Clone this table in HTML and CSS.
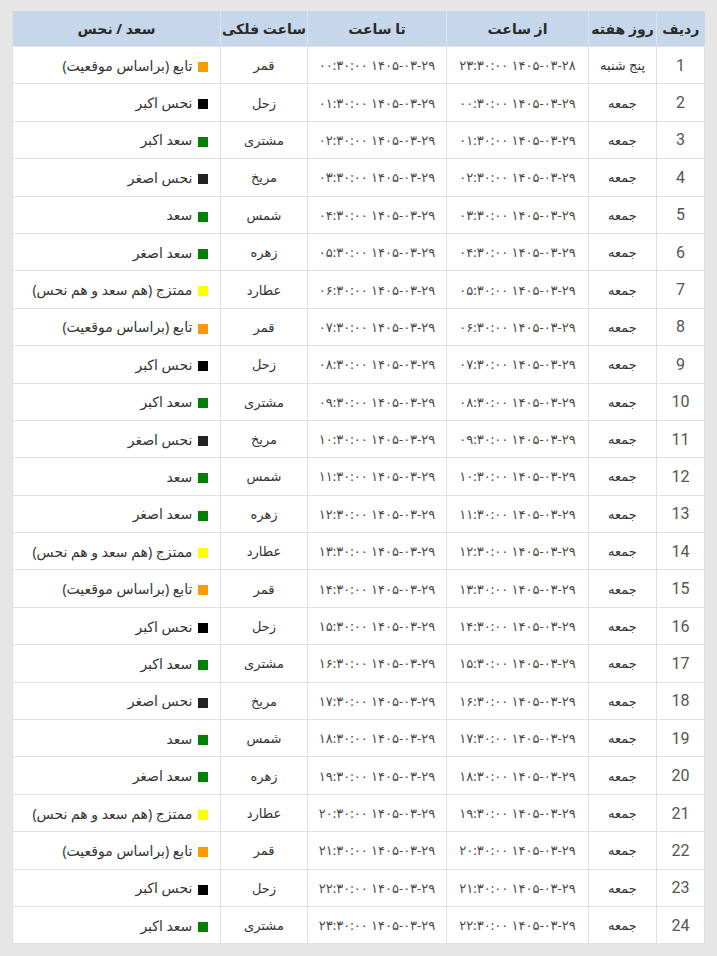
FILE: index.html
```html
<!DOCTYPE html>
<html lang="fa" dir="rtl">
<head>
<meta charset="utf-8">
<title>ساعات فلکی</title>
<link rel="stylesheet" href="styles.css">
</head>
<body>
<div class="wrap">
<table class="hours">
<colgroup>
<col class="c-num"><col class="c-day"><col class="c-from"><col class="c-to"><col class="c-planet"><col class="c-type">
</colgroup>
<thead>
<tr><th>ردیف</th><th>روز هفته</th><th>از ساعت</th><th>تا ساعت</th><th>ساعت فلکی</th><th>سعد / نحس</th></tr>
</thead>
<tbody>
<tr><td class="num">1</td><td>پنج شنبه</td><td class="time">۱۴۰۵-۰۳-۲۸ ۲۳:۳۰:۰۰</td><td class="time">۱۴۰۵-۰۳-۲۹ ۰۰:۳۰:۰۰</td><td>قمر</td><td class="type"><span class="sq orange"></span> تابع (براساس موقعیت)</td></tr>
<tr><td class="num">2</td><td>جمعه</td><td class="time">۱۴۰۵-۰۳-۲۹ ۰۰:۳۰:۰۰</td><td class="time">۱۴۰۵-۰۳-۲۹ ۰۱:۳۰:۰۰</td><td>زحل</td><td class="type"><span class="sq black"></span> نحس اکبر</td></tr>
<tr><td class="num">3</td><td>جمعه</td><td class="time">۱۴۰۵-۰۳-۲۹ ۰۱:۳۰:۰۰</td><td class="time">۱۴۰۵-۰۳-۲۹ ۰۲:۳۰:۰۰</td><td>مشتری</td><td class="type"><span class="sq green"></span> سعد اکبر</td></tr>
<tr><td class="num">4</td><td>جمعه</td><td class="time">۱۴۰۵-۰۳-۲۹ ۰۲:۳۰:۰۰</td><td class="time">۱۴۰۵-۰۳-۲۹ ۰۳:۳۰:۰۰</td><td>مریخ</td><td class="type"><span class="sq dark"></span> نحس اصغر</td></tr>
<tr><td class="num">5</td><td>جمعه</td><td class="time">۱۴۰۵-۰۳-۲۹ ۰۳:۳۰:۰۰</td><td class="time">۱۴۰۵-۰۳-۲۹ ۰۴:۳۰:۰۰</td><td>شمس</td><td class="type"><span class="sq green"></span> سعد</td></tr>
<tr><td class="num">6</td><td>جمعه</td><td class="time">۱۴۰۵-۰۳-۲۹ ۰۴:۳۰:۰۰</td><td class="time">۱۴۰۵-۰۳-۲۹ ۰۵:۳۰:۰۰</td><td>زهره</td><td class="type"><span class="sq green"></span> سعد اصغر</td></tr>
<tr><td class="num">7</td><td>جمعه</td><td class="time">۱۴۰۵-۰۳-۲۹ ۰۵:۳۰:۰۰</td><td class="time">۱۴۰۵-۰۳-۲۹ ۰۶:۳۰:۰۰</td><td>عطارد</td><td class="type"><span class="sq yellow"></span> ممتزج (هم سعد و هم نحس)</td></tr>
<tr><td class="num">8</td><td>جمعه</td><td class="time">۱۴۰۵-۰۳-۲۹ ۰۶:۳۰:۰۰</td><td class="time">۱۴۰۵-۰۳-۲۹ ۰۷:۳۰:۰۰</td><td>قمر</td><td class="type"><span class="sq orange"></span> تابع (براساس موقعیت)</td></tr>
<tr><td class="num">9</td><td>جمعه</td><td class="time">۱۴۰۵-۰۳-۲۹ ۰۷:۳۰:۰۰</td><td class="time">۱۴۰۵-۰۳-۲۹ ۰۸:۳۰:۰۰</td><td>زحل</td><td class="type"><span class="sq black"></span> نحس اکبر</td></tr>
<tr><td class="num">10</td><td>جمعه</td><td class="time">۱۴۰۵-۰۳-۲۹ ۰۸:۳۰:۰۰</td><td class="time">۱۴۰۵-۰۳-۲۹ ۰۹:۳۰:۰۰</td><td>مشتری</td><td class="type"><span class="sq green"></span> سعد اکبر</td></tr>
<tr><td class="num">11</td><td>جمعه</td><td class="time">۱۴۰۵-۰۳-۲۹ ۰۹:۳۰:۰۰</td><td class="time">۱۴۰۵-۰۳-۲۹ ۱۰:۳۰:۰۰</td><td>مریخ</td><td class="type"><span class="sq dark"></span> نحس اصغر</td></tr>
<tr><td class="num">12</td><td>جمعه</td><td class="time">۱۴۰۵-۰۳-۲۹ ۱۰:۳۰:۰۰</td><td class="time">۱۴۰۵-۰۳-۲۹ ۱۱:۳۰:۰۰</td><td>شمس</td><td class="type"><span class="sq green"></span> سعد</td></tr>
<tr><td class="num">13</td><td>جمعه</td><td class="time">۱۴۰۵-۰۳-۲۹ ۱۱:۳۰:۰۰</td><td class="time">۱۴۰۵-۰۳-۲۹ ۱۲:۳۰:۰۰</td><td>زهره</td><td class="type"><span class="sq green"></span> سعد اصغر</td></tr>
<tr><td class="num">14</td><td>جمعه</td><td class="time">۱۴۰۵-۰۳-۲۹ ۱۲:۳۰:۰۰</td><td class="time">۱۴۰۵-۰۳-۲۹ ۱۳:۳۰:۰۰</td><td>عطارد</td><td class="type"><span class="sq yellow"></span> ممتزج (هم سعد و هم نحس)</td></tr>
<tr><td class="num">15</td><td>جمعه</td><td class="time">۱۴۰۵-۰۳-۲۹ ۱۳:۳۰:۰۰</td><td class="time">۱۴۰۵-۰۳-۲۹ ۱۴:۳۰:۰۰</td><td>قمر</td><td class="type"><span class="sq orange"></span> تابع (براساس موقعیت)</td></tr>
<tr><td class="num">16</td><td>جمعه</td><td class="time">۱۴۰۵-۰۳-۲۹ ۱۴:۳۰:۰۰</td><td class="time">۱۴۰۵-۰۳-۲۹ ۱۵:۳۰:۰۰</td><td>زحل</td><td class="type"><span class="sq black"></span> نحس اکبر</td></tr>
<tr><td class="num">17</td><td>جمعه</td><td class="time">۱۴۰۵-۰۳-۲۹ ۱۵:۳۰:۰۰</td><td class="time">۱۴۰۵-۰۳-۲۹ ۱۶:۳۰:۰۰</td><td>مشتری</td><td class="type"><span class="sq green"></span> سعد اکبر</td></tr>
<tr><td class="num">18</td><td>جمعه</td><td class="time">۱۴۰۵-۰۳-۲۹ ۱۶:۳۰:۰۰</td><td class="time">۱۴۰۵-۰۳-۲۹ ۱۷:۳۰:۰۰</td><td>مریخ</td><td class="type"><span class="sq dark"></span> نحس اصغر</td></tr>
<tr><td class="num">19</td><td>جمعه</td><td class="time">۱۴۰۵-۰۳-۲۹ ۱۷:۳۰:۰۰</td><td class="time">۱۴۰۵-۰۳-۲۹ ۱۸:۳۰:۰۰</td><td>شمس</td><td class="type"><span class="sq green"></span> سعد</td></tr>
<tr><td class="num">20</td><td>جمعه</td><td class="time">۱۴۰۵-۰۳-۲۹ ۱۸:۳۰:۰۰</td><td class="time">۱۴۰۵-۰۳-۲۹ ۱۹:۳۰:۰۰</td><td>زهره</td><td class="type"><span class="sq green"></span> سعد اصغر</td></tr>
<tr><td class="num">21</td><td>جمعه</td><td class="time">۱۴۰۵-۰۳-۲۹ ۱۹:۳۰:۰۰</td><td class="time">۱۴۰۵-۰۳-۲۹ ۲۰:۳۰:۰۰</td><td>عطارد</td><td class="type"><span class="sq yellow"></span> ممتزج (هم سعد و هم نحس)</td></tr>
<tr><td class="num">22</td><td>جمعه</td><td class="time">۱۴۰۵-۰۳-۲۹ ۲۰:۳۰:۰۰</td><td class="time">۱۴۰۵-۰۳-۲۹ ۲۱:۳۰:۰۰</td><td>قمر</td><td class="type"><span class="sq orange"></span> تابع (براساس موقعیت)</td></tr>
<tr><td class="num">23</td><td>جمعه</td><td class="time">۱۴۰۵-۰۳-۲۹ ۲۱:۳۰:۰۰</td><td class="time">۱۴۰۵-۰۳-۲۹ ۲۲:۳۰:۰۰</td><td>زحل</td><td class="type"><span class="sq black"></span> نحس اکبر</td></tr>
<tr><td class="num">24</td><td>جمعه</td><td class="time">۱۴۰۵-۰۳-۲۹ ۲۲:۳۰:۰۰</td><td class="time">۱۴۰۵-۰۳-۲۹ ۲۳:۳۰:۰۰</td><td>مشتری</td><td class="type"><span class="sq green"></span> سعد اکبر</td></tr>
</tbody>
</table>
</div>
</body>
</html>
```
FILE: styles.css
```css
html, body {
  margin: 0;
  padding: 0;
  background: #e6e6e6;
}
body {
  font-family: "Noto Sans", "DejaVu Sans", sans-serif;
  color: #333;
}
.wrap {
  padding: 11px 12px 12px 13px;
}
.hours {
  width: 692px;
  border-collapse: collapse;
  table-layout: fixed;
  background: #fff;
  direction: rtl;
}
.c-num { width: 48px; }
.c-day { width: 68px; }
.c-from { width: 142px; }
.c-to { width: 139px; }
.c-planet { width: 87px; }
.c-type { width: 208px; }
.hours th {
  background: #c6d7ec;
  color: #2a2a2a;
  font-weight: bold;
  font-size: 14px;
  height: 35px;
  padding: 0;
  border-left: 1px solid #dbe4ef;
  text-align: center;
  white-space: nowrap;
}
.hours td {
  height: 36.4px;
  padding: 0;
  border: 1px solid #e0e0e0;
  text-align: center;
  font-size: 13px;
  white-space: nowrap;
}
.hours td.time {
  color: #4a4a4a;
}
.hours td.num {
  font-family: Roboto, "Noto Sans", sans-serif;
  font-size: 16px;
  color: #555;
}
.hours td.type {
  text-align: right;
  padding-right: 12px;
  font-size: 14px;
}
.sq {
  display: inline-block;
  width: 10px;
  height: 10px;
  vertical-align: middle;
  margin-left: 2px;
}
.orange { background: #ff9900; }
.black { background: #000; }
.green { background: #008000; }
.dark { background: #222; }
.yellow { background: #ffff00; }
```
